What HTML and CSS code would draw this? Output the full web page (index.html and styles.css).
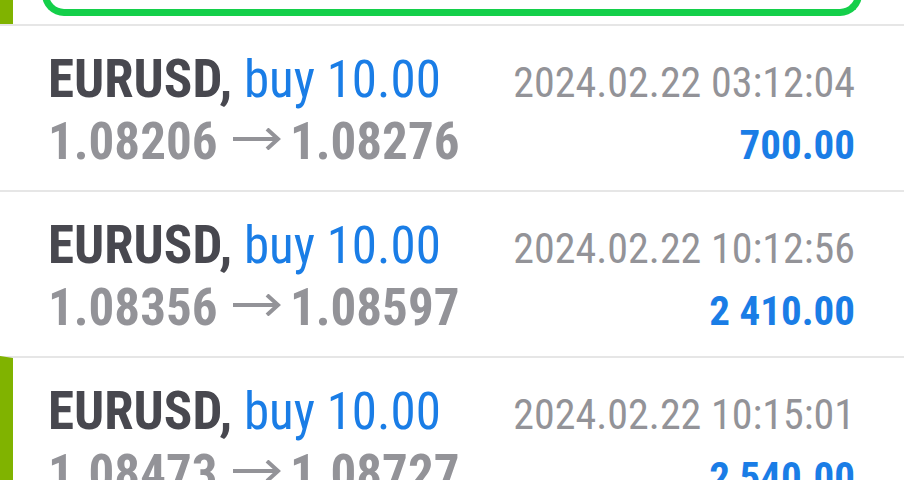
FILE: index.html
```html
<!DOCTYPE html>
<html lang="en">
<head>
  <meta charset="UTF-8" />
  <title>History</title>
  <link rel="stylesheet" href="styles.css">
</head>
<body>

  <div class="prev-row">
    <div class="mark"></div>
    <div class="prev-box"></div>
  </div>

  <div class="deal">
    <div class="deal-body">
      <div class="title"><span class="symbol">EURUSD,</span> <span class="side">buy 10.00</span></div>
      <div class="time">2024.02.22 03:12:04</div>
      <div class="prices">1.08206 <svg class="arrow" width="48" height="22" viewBox="0 0 48 22"><path d="M0 11H45M34 1L45 11L34 21" /></svg> 1.08276</div>
      <div class="profit">700.00</div>
    </div>
  </div>

  <div class="deal">
    <div class="deal-body">
      <div class="title"><span class="symbol">EURUSD,</span> <span class="side">buy 10.00</span></div>
      <div class="time">2024.02.22 10:12:56</div>
      <div class="prices">1.08356 <svg class="arrow" width="48" height="22" viewBox="0 0 48 22"><path d="M0 11H45M34 1L45 11L34 21" /></svg> 1.08597</div>
      <div class="profit">2 410.00</div>
    </div>
  </div>

  <div class="deal marked">
    <div class="deal-body">
      <div class="title"><span class="symbol">EURUSD,</span> <span class="side">buy 10.00</span></div>
      <div class="time">2024.02.22 10:15:01</div>
      <div class="prices">1.08473 <svg class="arrow" width="48" height="22" viewBox="0 0 48 22"><path d="M0 11H45M34 1L45 11L34 21" /></svg> 1.08727</div>
      <div class="profit">2 540.00</div>
    </div>
  </div>

</body>
</html>
```

FILE: styles.css
```css
body {
  margin: 0;
  background: #fff;
  font-family: "Roboto Condensed", Roboto, sans-serif;
  font-stretch: 80%;
  overflow: hidden;
}

.prev-row {
  display: flex;
  align-items: flex-end;
  height: 24px;
  overflow: hidden;
}

.mark {
  width: 13px;
  height: 24px;
  background: #80b300;
}

.prev-box {
  width: 806px;
  height: 60px;
  margin-left: 29px;
  margin-bottom: 8px;
  border: 7px solid #14cf4a;
  border-top: none;
  border-radius: 0 0 22px 22px;
}

.deal {
  border-top: 2px solid #e6e6e6;
  height: 164px;
}

.deal.marked {
  border-left: 13px solid #80b300;
}

.deal-body {
  display: grid;
  grid-template-columns: 1fr auto;
  align-items: baseline;
  padding: 24px 49px 0 48px;
  line-height: 59px;
}

.deal.marked .deal-body {
  padding-left: 35px;
}

.title {
  font-size: 51px;
}

.symbol {
  color: #48484f;
  font-size: 53px;
  font-weight: bold;
}

.side {
  color: #1a7de6;
}

.prices {
  font-size: 51px;
  font-weight: bold;
  color: #939398;
}

.arrow {
  vertical-align: 9px;
  margin: 0 -3px 0 4px;
  fill: none;
  stroke: #939398;
  stroke-width: 4;
}

.time {
  font-size: 42px;
  color: #939398;
  text-align: right;
}

.profit {
  font-size: 41px;
  font-weight: bold;
  color: #1a7de6;
  text-align: right;
}
```
